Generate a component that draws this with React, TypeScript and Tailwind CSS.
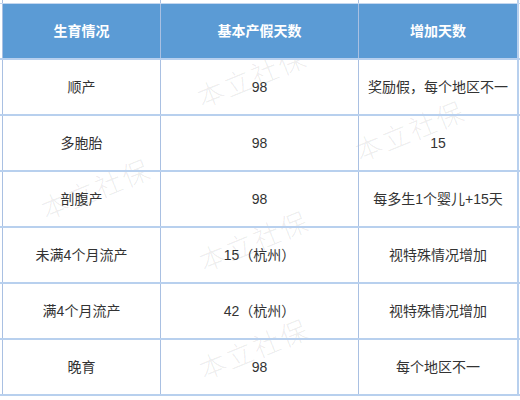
const rows = [
  ['顺产', '98', '奖励假，每个地区不一'],
  ['多胞胎', '98', '15'],
  ['剖腹产', '98', '每多生1个婴儿+15天'],
  ['未满4个月流产', '15（杭州）', '视特殊情况增加'],
  ['满4个月流产', '42（杭州）', '视特殊情况增加'],
  ['晚育', '98', '每个地区不一'],
];

const marks = [
  { left: 198, top: 78 },
  { left: 356, top: 132 },
  { left: 42, top: 190 },
  { left: 200, top: 242 },
  { left: 200, top: 350 },
];

function Row({ cells, header }: { cells: string[]; header?: boolean }) {
  const cell = header
    ? 'flex items-center justify-center border-l border-[#a9c0e2] text-[14px] font-bold text-white'
    : 'flex items-center justify-center border-l border-[#a9c0e2] text-[14px] text-[#333]';
  return (
    <div
      className={`flex h-[56px] border-b-2 border-[#b8d0ee] ${header ? 'bg-[#5b9bd5]' : ''}`}
    >
      <div className="w-[2px] bg-white" />
      <div className={`${cell} w-[158px]`}>{cells[0]}</div>
      <div className={`${cell} w-[198px]`}>{cells[1]}</div>
      <div className={`${cell} w-[159px]`}>{cells[2]}</div>
      <div className="flex-1 border-l-2 border-[#b8d0ee] bg-white" />
    </div>
  );
}

export default function App() {
  return (
    <div
      className="relative h-[400px] w-[520px] overflow-hidden bg-white"
      style={{ fontFamily: '"Liberation Sans", "Noto Sans CJK SC", sans-serif' }}
    >
      {/* watermark sits behind the table text */}
      {marks.map((m, i) => (
        <div
          key={i}
          className="pointer-events-none absolute z-0 origin-left -rotate-[22deg] whitespace-nowrap text-[27px] font-light tracking-[2px] text-[#000]/[0.08]"
          style={{ left: m.left, top: m.top, fontFamily: '"Noto Sans CJK SC", serif' }}
        >
          本立社保
        </div>
      ))}

      <div className="relative z-10">
        <div className="flex h-[4px] border-b border-[#c4d7ef]">
          <div className="w-[2px]" />
          <div className="w-[158px] border-l border-[#a9c0e2]" />
          <div className="w-[198px] border-l border-[#a9c0e2]" />
          <div className="w-[159px] border-l border-[#a9c0e2]" />
          <div className="flex-1 border-l-2 border-[#b8d0ee]" />
        </div>
        <Row header cells={['生育情况', '基本产假天数', '增加天数']} />
        {rows.map((r) => (
          <Row key={r[0]} cells={r} />
        ))}
      </div>
    </div>
  );
}
